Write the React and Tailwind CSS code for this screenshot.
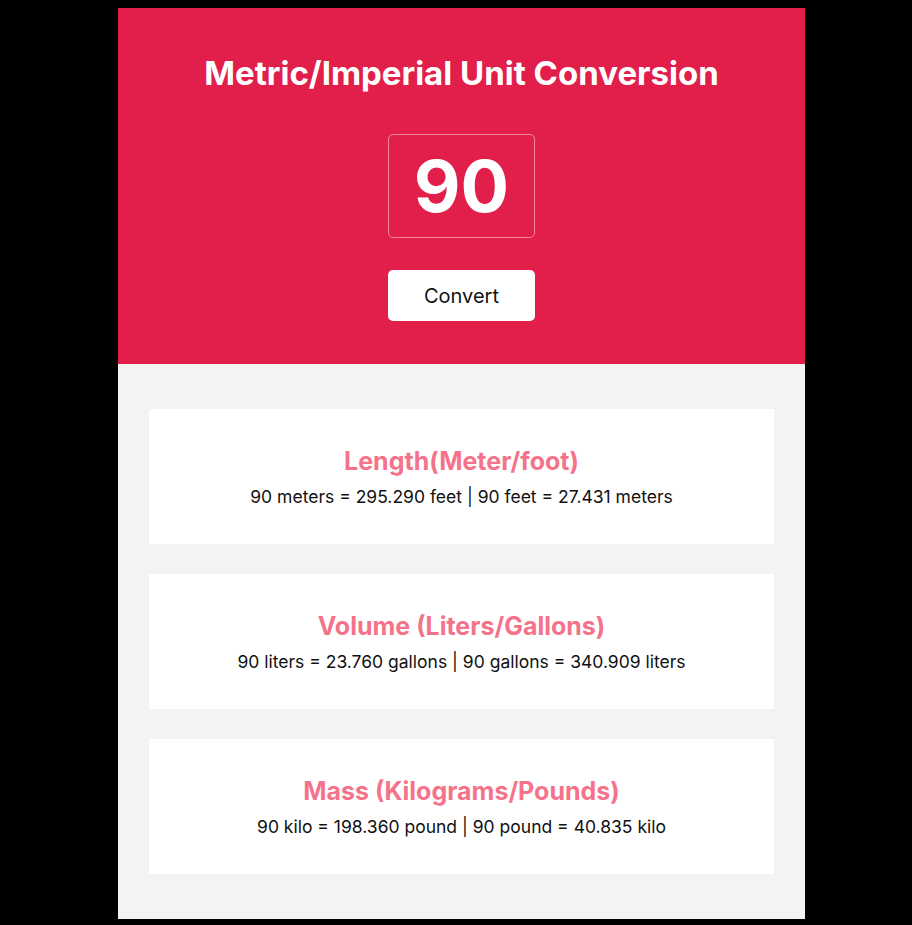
import React, { useState } from "react";

const FEET = 3.281;
const GAL = 0.264;
const LB = 2.204;

function ResultCard({ title, children }) {
  return (
    <div className="bg-white flex flex-col items-center pt-[36px] pb-[33px] gap-[6px]">
      <h2 className="text-[25px] leading-[32px] font-bold text-[#f5738a]">{title}</h2>
      <p className="text-[17.5px] leading-[28px] text-[#111]">{children}</p>
    </div>
  );
}

export default function App() {
  const [value, setValue] = useState("90");
  const [num, setNum] = useState(90);

  const handleConvert = () => {
    const n = Number(value);
    setNum(isNaN(n) ? 0 : n);
  };

  return (
    <div className="min-h-screen bg-black pt-2 pb-[6px] pl-[118px]" style={{ fontFamily: "Inter, 'Noto Sans', sans-serif" }}>
      <div className="w-[687px]">
        <div className="bg-[#e21f4a] flex flex-col items-center pt-[45px] pb-[43px]">
          <h1 className="text-white text-[33px] leading-[40px] font-bold">
            Metric/Imperial Unit Conversion
          </h1>
          <input
            className="mt-[41px] w-[147px] h-[104px] bg-transparent border border-[#f8869a] rounded-[5px] text-white text-[72px] font-bold text-center outline-none"
            value={value}
            onChange={(e) => setValue(e.target.value)}
          />
          <button
            onClick={handleConvert}
            className="mt-[32px] w-[147px] h-[51px] bg-white rounded-[5px] text-[20px] text-[#111]"
          >
            Convert
          </button>
        </div>
        <div className="bg-[#f3f3f3] px-[31px] py-[45px] flex flex-col gap-[30px]">
          <ResultCard title="Length(Meter/foot)">
            {num} meters = {(num * FEET).toFixed(3)} feet | {num} feet = {(num / FEET).toFixed(3)} meters
          </ResultCard>
          <ResultCard title="Volume (Liters/Gallons)">
            {num} liters = {(num * GAL).toFixed(3)} gallons | {num} gallons = {(num / GAL).toFixed(3)} liters
          </ResultCard>
          <ResultCard title="Mass (Kilograms/Pounds)">
            {num} kilo = {(num * LB).toFixed(3)} pound | {num} pound = {(num / LB).toFixed(3)} kilo
          </ResultCard>
        </div>
      </div>
    </div>
  );
}
